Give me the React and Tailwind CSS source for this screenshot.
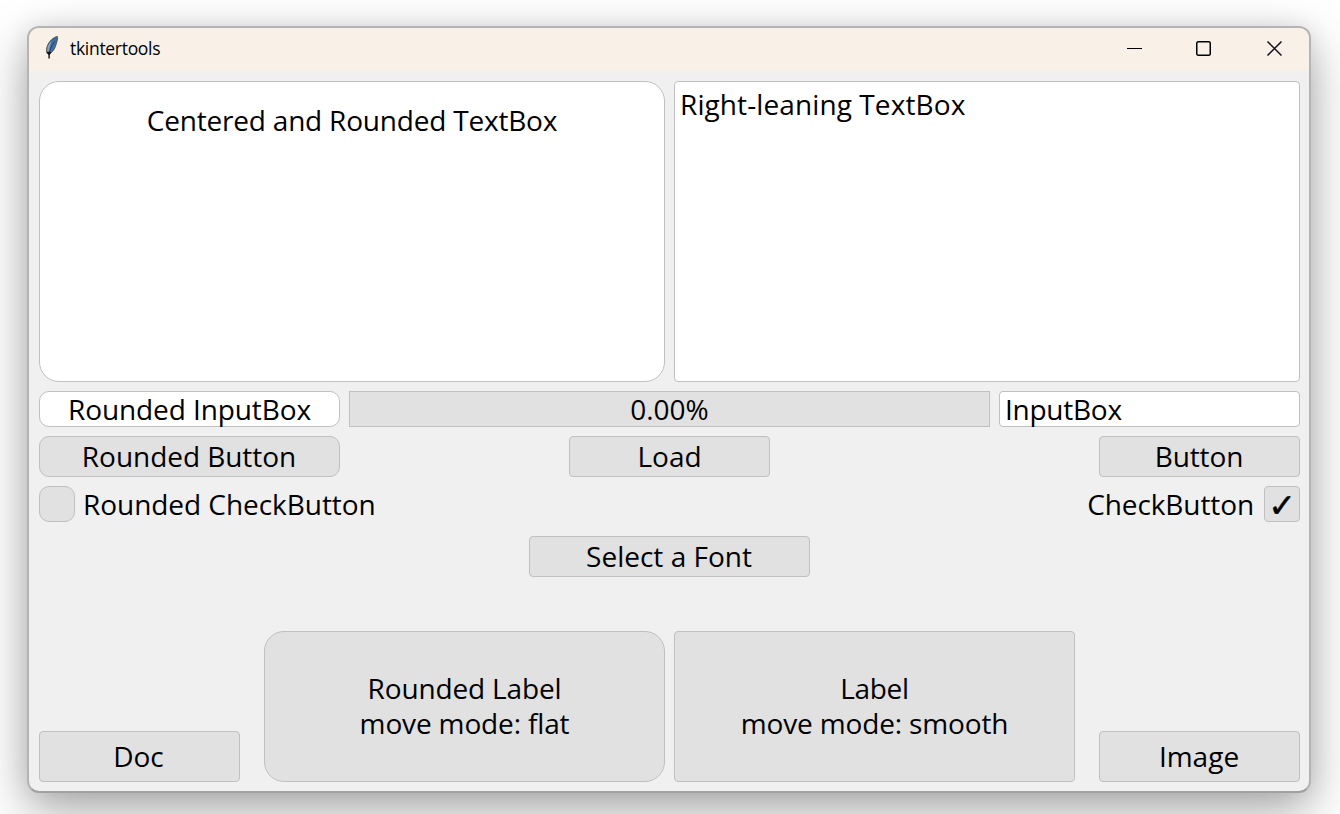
import React from "react";

const face = "border border-[#c0c0c0] bg-[#e1e1e1]";
const field = "border border-[#c0c0c0] bg-white";

function Txt({ children, className = "" }) {
  return <span className={"block whitespace-nowrap leading-[35px] " + className}>{children}</span>;
}

function Button({ children, className }) {
  return (
    <button className={`flex shrink-0 items-center justify-center ${face} ${className}`}>
      {children}
    </button>
  );
}

function Feather() {
  return (
    <svg width="16" height="26" viewBox="0 0 16 26" className="shrink-0">
      <path d="M13.4 1.6 C9.6 2 5 6.4 3.4 10.8 C2.4 13.4 2.4 16 3 18.2 L5 18.8 C8 17.4 10.4 14.8 11.4 11.4 C12.6 8 13.8 4.6 13.4 1.6Z" fill="#3b6dab" stroke="#55524a" strokeWidth="1" />
      <path d="M3.3 17.5 C2.8 13 4 9.4 7.5 6 L5.8 12 L4.6 17Z" fill="#8fa3b3" />
      <path d="M10.5 6.5 C8 10 6 14 5 18.5" fill="none" stroke="#26405f" strokeWidth="1" />
      <path d="M2.6 16.8 L7.4 17 L5.8 20 V23.5 H4.4 V20Z" fill="#111" />
    </svg>
  );
}

function TitleBar() {
  return (
    <header className="flex h-[43px] shrink-0 items-center bg-[#f9f1e8]">
      <div className="ml-[15px] mt-[-3px] flex">
        <Feather />
      </div>
      <span className="ml-[10px] mt-[-4px] text-[17.5px] leading-6 tracking-[-0.3px]">tkintertools</span>
      <div className="ml-auto mt-[-4px] flex items-center pr-[27px]">
        <svg width="16" height="16" viewBox="0 0 16 16">
          <path d="M1 8.5H16" stroke="#000" />
        </svg>
        <svg width="16" height="16" viewBox="0 0 16 16" className="ml-[53px]">
          <rect x="1.75" y="1.75" width="13.5" height="13.5" rx="1.5" fill="none" stroke="#000" strokeWidth="1.5" />
        </svg>
        <svg width="16" height="16" viewBox="0 0 16 16" className="ml-[55px]">
          <path d="M1.5 1.5L15.5 15.5M15.5 1.5L1.5 15.5" stroke="#10101a" strokeWidth="1.5" />
        </svg>
      </div>
    </header>
  );
}

export default function App() {
  return (
    <div className="h-[814px] w-[1340px] overflow-hidden bg-white pl-[27px] pt-[26px] font-['Open_Sans','Noto_Sans',sans-serif] text-black">
      <div className="flex h-[767px] w-[1284px] flex-col overflow-hidden rounded-[12px] border-2 border-[#b4b4b4] border-b-[#a0a0a0] bg-[#f0f0f0] shadow-[0_18px_50px_rgba(0,0,0,0.34),0_0_24px_rgba(0,0,0,0.08)]">
        <TitleBar />
        <main className="flex h-[720px] flex-col gap-[9px] pb-[9px] pl-[10px] pr-[9px] pt-[10px] text-[28px]">
          <div className="flex gap-[9px]">
            <div className={`flex h-[301px] w-[626px] justify-center rounded-[20px] pt-[21px] ${field}`}>
              <Txt className="tracking-[-0.2px]">Centered and Rounded TextBox</Txt>
            </div>
            <div className={`h-[301px] w-[626px] rounded-[4px] pl-[5px] pt-[5px] ${field}`}>
              <Txt className="tracking-[0.1px]">Right-leaning TextBox</Txt>
            </div>
          </div>
          <div className="flex h-9 gap-[9px]">
            <div className={`flex w-[301px] items-center justify-center rounded-[10px] ${field}`}>
              <Txt className="tracking-[-0.1px]">Rounded InputBox</Txt>
            </div>
            <div className={`flex w-[641px] items-center justify-center ${face}`}>
              <Txt>0.00%</Txt>
            </div>
            <div className={`flex w-[301px] items-center rounded-[4px] pl-[5px] ${field}`}>
              <Txt className="tracking-[-0.25px]">InputBox</Txt>
            </div>
          </div>
          <div className="flex h-[41px]">
            <Button className="w-[301px] rounded-[10px]"><Txt className="pr-px tracking-[-0.05px]">Rounded Button</Txt></Button>
            <Button className="ml-[229px] w-[201px] rounded-[4px]"><Txt>Load</Txt></Button>
            <Button className="ml-auto w-[201px] rounded-[4px] pr-px"><Txt className="tracking-[-0.15px]">Button</Txt></Button>
          </div>
          <div className="flex h-9 items-center">
            <span className={`w-9 self-stretch rounded-[10px] ${face}`} />
            <Txt className="ml-[8px] tracking-[-0.05px]">Rounded CheckButton</Txt>
            <Txt className="ml-auto mr-[10px] tracking-[-0.1px]">CheckButton</Txt>
            <span className={`flex w-9 items-center justify-center self-stretch rounded-[4px] ${face}`}>
              <span className="pt-[3px] font-['DejaVu_Sans'] text-[33px] leading-none [-webkit-text-stroke:0.5px_black]">✓</span>
            </span>
          </div>
          <div className="mt-[5px] flex justify-center">
            <Button className="h-[41px] w-[281px] rounded-[4px] pr-px"><Txt>Select a Font</Txt></Button>
          </div>
          <div className="mt-auto flex items-end">
            <Button className="h-[51px] w-[201px] rounded-[4px] pr-[2px]"><Txt>Doc</Txt></Button>
            <div className={`ml-[24px] flex h-[151px] w-[401px] flex-col items-center justify-center rounded-[20px] pb-[2px] ${face}`}>
              <Txt className="tracking-[-0.15px]">Rounded Label</Txt>
              <Txt className="tracking-[-0.15px]">move mode: flat</Txt>
            </div>
            <div className={`ml-[9px] flex h-[151px] w-[401px] flex-col items-center justify-center rounded-[4px] pb-[2px] ${face}`}>
              <Txt className="tracking-[-0.3px]">Label</Txt>
              <Txt className="tracking-[-0.15px]">move mode: smooth</Txt>
            </div>
            <Button className="ml-[24px] h-[51px] w-[201px] rounded-[4px] pr-px"><Txt>Image</Txt></Button>
          </div>
        </main>
      </div>
    </div>
  );
}
